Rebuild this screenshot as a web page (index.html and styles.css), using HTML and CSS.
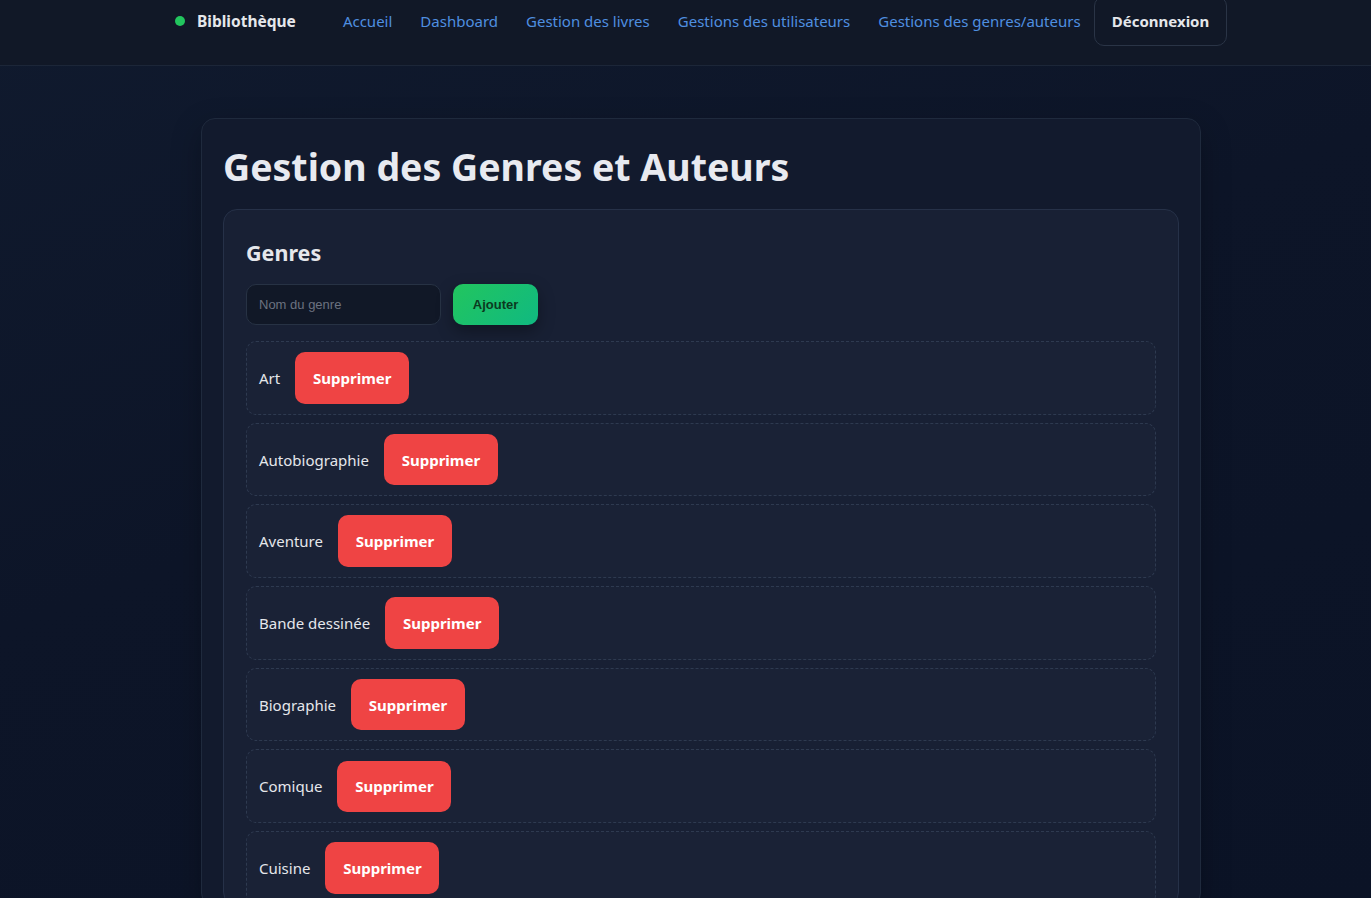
FILE: index.html
```html
<!DOCTYPE html>
<html lang="fr">
<head>
<meta charset="utf-8">
<title>Gestion des Genres et Auteurs</title>
<link rel="stylesheet" href="styles.css">
</head>
<body>
<header class="topbar">
  <nav class="nav">
    <a class="brand" href="#"><span class="brand-dot"></span>Bibliothèque</a>
    <div class="nav-links">
      <a href="#">Accueil</a>
      <a href="#">Dashboard</a>
      <a href="#">Gestion des livres</a>
      <a href="#">Gestions des utilisateurs</a>
      <a href="#">Gestions des genres/auteurs</a>
    </div>
    <button class="logout" type="button">Déconnexion</button>
  </nav>
</header>

<main class="page">
  <section class="panel">
    <h1 class="title">Gestion des Genres et Auteurs</h1>

    <div class="card">
      <h2 class="card-title">Genres</h2>
      <form class="add-form">
        <input class="field" type="text" placeholder="Nom du genre">
        <button class="btn-add" type="button">Ajouter</button>
      </form>

      <ul class="list">
        <li class="item"><span>Art</span><button class="btn-del" type="button">Supprimer</button></li>
        <li class="item"><span>Autobiographie</span><button class="btn-del" type="button">Supprimer</button></li>
        <li class="item"><span>Aventure</span><button class="btn-del" type="button">Supprimer</button></li>
        <li class="item"><span>Bande dessinée</span><button class="btn-del" type="button">Supprimer</button></li>
        <li class="item"><span>Biographie</span><button class="btn-del" type="button">Supprimer</button></li>
        <li class="item"><span>Comique</span><button class="btn-del" type="button">Supprimer</button></li>
        <li class="item"><span>Cuisine</span><button class="btn-del" type="button">Supprimer</button></li>
      </ul>
    </div>
  </section>
</main>
</body>
</html>
```

FILE: styles.css
```css
* { box-sizing: border-box; }

html, body { height: 100%; }

body {
  margin: 0;
  padding-left: 31px;
  overflow: hidden;
  font-family: "Noto Sans", "Open Sans", sans-serif;
  color: #e5e7eb;
  background: linear-gradient(160deg, #101a2e 0%, #0d1528 45%, #0b1326 100%);
}

/* top navigation */
.topbar {
  margin-left: -31px;
  padding-left: 31px;
  background: #111827;
  border-bottom: 1px solid #1c2638;
  height: 66px;
}

.nav {
  width: 1052px;
  margin: 0 auto;
  height: 42px;
  display: flex;
  align-items: center;
}

.brand {
  display: flex;
  align-items: center;
  gap: 12px;
  font-weight: 700;
  font-size: 15.5px;
  color: #e5e7eb;
  text-decoration: none;
}

.brand-dot {
  width: 10px;
  height: 10px;
  border-radius: 50%;
  background: #22c55e;
}

.nav-links {
  display: flex;
  gap: 28px;
  margin-left: 47px;
}

.nav-links a {
  color: #4f8fe0;
  text-decoration: none;
  font-size: 15px;
}

.logout {
  margin-left: auto;
  height: 50px;
  width: 133px;
  background: #111827;
  border: 1px solid #2a3446;
  border-radius: 10px;
  color: #e5e7eb;
  font-family: inherit;
  font-weight: 700;
  font-size: 15px;
}

/* page body */
.page {
  width: 1000px;
  margin: 52px auto 0;
}

.panel {
  background: #121a2d;
  border: 1px solid #1f2a3d;
  border-radius: 14px;
  padding: 24px 21px 0;
  box-shadow: 0 10px 30px rgba(0, 0, 0, 0.25);
}

.title {
  margin: 0 0 18px;
  font-size: 37.5px;
  font-weight: 700;
  line-height: 48px;
  color: #e8eaf0;
}

.card {
  background: #182034;
  border: 1px solid #263148;
  border-radius: 14px;
  padding: 22px 22px 0;
}

.card-title {
  margin: 6px 0 16px;
  font-size: 21.5px;
  font-weight: 700;
  line-height: 30px;
}

.add-form {
  display: flex;
  gap: 12px;
  margin-bottom: 16px;
}

.field {
  width: 195px;
  height: 41px;
  padding: 0 12px;
  background: #111827;
  border: 1px solid #273244;
  border-radius: 10px;
  color: #e5e7eb;
  font-family: "Liberation Sans", Arial, sans-serif;
  font-size: 13px;
}

.field::placeholder { color: #6b7280; }

.btn-add {
  width: 85px;
  height: 41px;
  border: 0;
  border-radius: 10px;
  background: linear-gradient(135deg, #22c55e, #10b981);
  color: #0b3a1f;
  font-family: "Liberation Sans", Arial, sans-serif;
  font-weight: 700;
  font-size: 13px;
  box-shadow: 0 6px 16px rgba(0, 0, 0, 0.35);
}

.list {
  list-style: none;
  margin: 0;
  padding: 0;
  display: flex;
  flex-direction: column;
  gap: 8px;
}

.item {
  display: flex;
  align-items: center;
  gap: 15px;
  height: 73.7px;
  padding: 0 12px;
  border: 1px dashed #2e3a50;
  border-radius: 10px;
  background: #1a2236;
  font-size: 15px;
  color: #e5e7eb;
}

.btn-del {
  width: 114px;
  height: 51.5px;
  border: 0;
  border-radius: 10px;
  background: #ef4444;
  color: #fff;
  font-family: inherit;
  font-weight: 700;
  font-size: 15px;
}
```
